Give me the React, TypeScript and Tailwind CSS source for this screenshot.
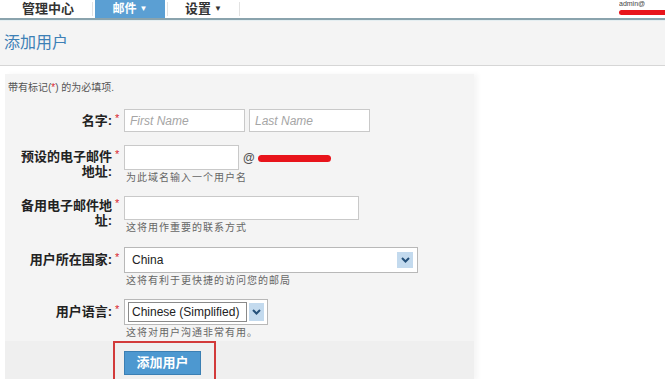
import React from "react";

const font = { fontFamily: '"Liberation Sans", Arial, "Noto Sans CJK SC", sans-serif' };

function Star() {
  return <span className="block w-[6px] shrink-0 whitespace-nowrap pl-[3px] text-[11px] leading-[10px] text-[#d9232d]">*</span>;
}

function Label({ children, pt }: { children: React.ReactNode; pt: string }) {
  return (
    <div className={`w-[107px] shrink-0 text-right text-[13px] font-bold leading-[15px] text-[#222] ${pt}`}>
      {children}
    </div>
  );
}

function Hint({ children }: { children: React.ReactNode }) {
  return <div className="mt-[1px] pl-[2px] text-[10px] leading-[14px] tracking-[1px] text-[#666]">{children}</div>;
}

function Chevron({ cls }: { cls: string }) {
  return (
    <div className={`flex items-center justify-center bg-[#c3daee] ${cls}`}>
      <svg width="9" height="6" viewBox="0 0 9 6">
        <path d="M1 1 L4.5 4.5 L8 1" stroke="#24507a" strokeWidth="2" fill="none" />
      </svg>
    </div>
  );
}

export default function App() {
  return (
    <div className="relative h-[379px] w-[665px] overflow-hidden bg-white" style={font}>
      {/* nav */}
      <div className="flex h-[20px] border-b-2 border-[#8aa3ad]">
        <div className="flex w-[92px] items-center justify-center pl-[4px] text-[13px] font-bold text-[#333]">管理中心</div>
        <div className="my-[2px] w-[1px] bg-[#e2e2e2]" />
        <div className="ml-[2px] flex w-[70px] items-center justify-center bg-[#5b9fd3] text-[12px] font-bold text-white">
          邮件 <span className="ml-[3px] text-[8px]">▼</span>
        </div>
        <div className="ml-[2px] my-[2px] w-[1px] bg-[#e2e2e2]" />
        <div className="flex w-[71px] items-center justify-center text-[13px] font-bold text-[#333]">
          设置 <span className="ml-[3px] text-[8px]">▼</span>
        </div>
        <div className="my-[2px] w-[1px] bg-[#e2e2e2]" />
        <div className="flex-1" />
        <div className="flex w-[46px] flex-col items-start">
          <div className="h-[8px] overflow-hidden text-[7px] leading-[8px] text-[#444]">admin@</div>
          <div className="mt-[2px] h-[5px] w-[46px] rounded-l-sm bg-[#e8141b]" />
        </div>
      </div>
      <div className="h-[1px] bg-[#e4eef1]" />
      {/* title */}
      <div className="flex h-[45px] items-center border-b border-[#d6d6d6] bg-[#f4f4f4] pl-[4px] text-[16px] text-[#3d80b6]">
        添加用户
      </div>
      {/* panel */}
      <div className="ml-[5px] mt-[8px] w-[469px] shadow-[4px_0_5px_rgba(0,0,0,0.04)]">
        <div className="bg-[#f4f4f4] pb-[1px] pt-[7px]">
          <div className="pl-[3px] text-[10px] leading-[14px] text-[#555]">
            带有标记(<span className="text-[#d9232d]">*</span>) 的为必填项.
          </div>
          {/* row1 */}
          <div className="mt-[14px] flex">
            <Label pt="pt-[4px]">名字:</Label>
            <div className="pt-[4px]"><Star /></div>
            <div className="ml-[6px] flex gap-[4px]">
              <div className="flex h-[23px] w-[121px] items-center border border-[#c9c9c9] bg-white pl-[5px] text-[12px] italic text-[#a5a5a5]">First Name</div>
              <div className="flex h-[23px] w-[121px] items-center border border-[#c9c9c9] bg-white pl-[5px] text-[12px] italic text-[#a5a5a5]">Last Name</div>
            </div>
          </div>
          {/* row2 */}
          <div className="mt-[13px] flex">
            <Label pt="pt-[4px]">预设的电子邮件<br />地址:</Label>
            <div className="pt-[4px]"><Star /></div>
            <div className="ml-[6px]">
              <div className="flex items-center">
                <div className="h-[25px] w-[115px] border border-[#c9c9c9] bg-white" />
                <span className="ml-[4px] text-[12px] font-bold text-[#555]">@</span>
                <div className="ml-[3px] mt-[1px] h-[7px] w-[73px] rounded-full bg-[#e8141b]" />
              </div>
              <Hint>为此域名输入一个用户名</Hint>
            </div>
          </div>
          {/* row3 */}
          <div className="mt-[11px] flex">
            <Label pt="pt-[2px]">备用电子邮件地<br />址:</Label>
            <div className="pt-[2px]"><Star /></div>
            <div className="ml-[6px]">
              <div className="h-[24px] w-[235px] border border-[#c9c9c9] bg-white" />
              <Hint>这将用作重要的联系方式</Hint>
            </div>
          </div>
          {/* row4 */}
          <div className="mt-[12px] flex">
            <Label pt="pt-[5px]">用户所在国家:</Label>
            <div className="pt-[5px]"><Star /></div>
            <div className="ml-[6px]">
              <div className="flex h-[26px] w-[294px] items-center justify-between border border-[#b8b8b8] bg-white pl-[7px] pr-[4px] text-[12px] text-[#222]">
                China
                <Chevron cls="h-[16px] w-[16px]" />
              </div>
              <Hint>这将有利于更快捷的访问您的邮局</Hint>
            </div>
          </div>
          {/* row5 */}
          <div className="mt-[11px] flex">
            <Label pt="pt-[5px]">用户语言:</Label>
            <div className="pt-[5px]"><Star /></div>
            <div className="ml-[6px]">
              <div className="flex h-[26px] w-[144px] items-center border border-[#b8b8b8] bg-white pl-[3px] pr-[3px]">
                <div className="flex h-[20px] w-[120px] items-center border border-[#8a8a8a] pl-[3px] text-[12px] text-[#222]">Chinese (Simplified)</div>
                <Chevron cls="ml-[2px] h-[18px] w-[15px]" />
              </div>
              <Hint>这将对用户沟通非常有用。</Hint>
            </div>
          </div>
        </div>
        {/* bottom */}
        <div className="h-[40px] bg-[#efefef] pl-[108px]">
          <div className="h-[40px] w-[103px] border-2 border-b-0 border-[#d23a3a] pl-[9px] pt-[8px]">
            <div className="flex h-[24px] w-[77px] items-center justify-center border border-[#3b7fb3] bg-[#4d98d0] text-[13px] font-bold text-white">
              添加用户
            </div>
          </div>
        </div>
      </div>
    </div>
  );
}
